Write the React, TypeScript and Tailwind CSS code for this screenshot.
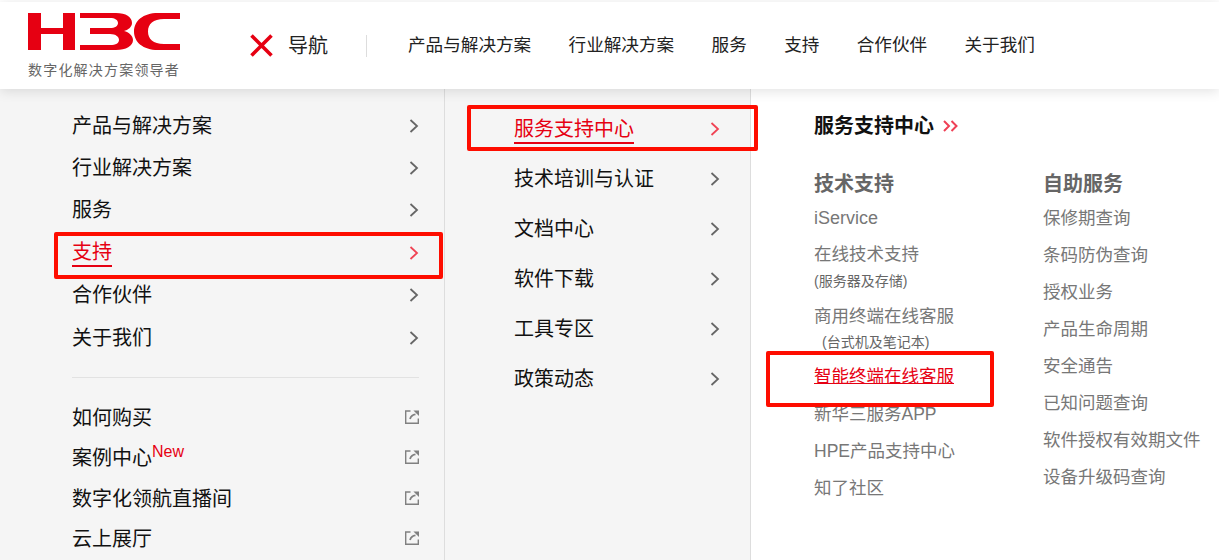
const cjk = "font-['Liberation_Sans','Noto_Sans_CJK_SC',sans-serif]";

const topNav = ['产品与解决方案', '行业解决方案', '服务', '支持', '合作伙伴', '关于我们'];
const leftMenu = ['产品与解决方案', '行业解决方案', '服务', '支持', '合作伙伴', '关于我们'];
const leftLinks = ['如何购买', '案例中心', '数字化领航直播间', '云上展厅'];
const midMenu = ['服务支持中心', '技术培训与认证', '文档中心', '软件下载', '工具专区', '政策动态'];
const selfService = [
	'保修期查询',
	'条码防伪查询',
	'授权业务',
	'产品生命周期',
	'安全通告',
	'已知问题查询',
	'软件授权有效期文件',
	'设备升级码查询'
];

function Logo() {
	return (
		<svg width="152" height="38" viewBox="0 0 152 38" fill="#e60012">
			<path d="M0 0h13v15h22V0h12v37H35V21H13v16H0z" />
			<path d="M52 0H88C98 0 104 4 104 10C104 14 100 17 96 18C101 19 105 23 105 27C105 33 98 37 88 37H52V32H82C88 32 91 30 91 27C91 24 88 21 82 21H62V15H82C87 15 90 13 90 10C90 7 87 5 82 5H52Z" />
			<path d="M152 0H130C115 0 106 8 106 18.5C106 29 115 37 130 37H152V31H136C125 31 120 26 120 18.5C120 11 125 6 136 6H152Z" />
		</svg>
	);
}

function Chevron({ active }: { active?: boolean }) {
	return (
		<svg width="10" height="16" viewBox="0 0 10 16" fill="none" stroke={active ? '#f04354' : '#666'} strokeWidth="1.8">
			<path d="M1.5 2l6.5 6-6.5 6" />
		</svg>
	);
}

function ExternalIcon() {
	return (
		<svg className="mb-[2px]" width="14" height="14" viewBox="0 0 14 14" fill="none" stroke="#808080" strokeWidth="1.4">
			<path d="M5.5 1H.7v12.3h12.6V8.5" />
			<path d="M5 9C6 6 8 4.6 10.5 4.4" strokeWidth="1.8" />
			<path d="M8.4.4H14v5.6z" fill="#808080" stroke="none" />
		</svg>
	);
}

function MenuRow({ label, active }: { label: string; active?: boolean }) {
	return (
		<div className="flex h-[42.4px] items-center justify-between">
			<span className={active ? 'border-b-2 border-[#e60012] text-[#e60012] leading-[26px]' : 'text-[#111]'}>
				{label}
			</span>
			<Chevron active={active} />
		</div>
	);
}

function Annotation({ className }: { className: string }) {
	return <div className={`pointer-events-none absolute rounded-[2px] border-4 border-[#fe0d00] ${className}`} />;
}

export default function App() {
	return (
		<div className={`relative h-[560px] w-[1219px] overflow-hidden bg-white ${cjk}`}>
			<header className="relative z-10 mt-[2px] flex h-[87px] items-center bg-white shadow-[0_2px_12px_rgba(0,0,0,0.12)]">
				<div className="ml-[28px] flex w-[152px] flex-col pt-[1px]">
					<Logo />
					<span className="mt-[10px] whitespace-nowrap text-[14px] leading-[18px] tracking-[1.2px] text-[#666]">
						数字化解决方案领导者
					</span>
				</div>
				<div className="ml-[70px] flex h-[22px] items-center border-r border-[#ddd] pr-[38px]">
					<svg width="23" height="23" viewBox="0 0 23 23" stroke="#e60012" strokeWidth="3.6">
						<path d="M1.5 1.5l20 20M21.5 1.5l-20 20" />
					</svg>
					<span className="ml-[15px] text-[20px] text-[#222]">导航</span>
				</div>
				<nav className="ml-[41px] flex gap-[37.4px] text-[17.6px] text-[#222]">
					{topNav.map((item) => (
						<span key={item}>{item}</span>
					))}
				</nav>
			</header>

			<main className="flex h-[471px]">
				<aside className="w-[445px] border-r border-[#ddd] bg-[#f5f5f5] pl-[72px] pr-[25px] pt-[15.4px] text-[20px]">
					{leftMenu.map((item) => (
						<MenuRow key={item} label={item} active={item === '支持'} />
					))}
					<div className="mt-[18.6px] mb-[19px] border-t border-[#e2e2e2]" />
					{leftLinks.map((item) => (
						<div key={item} className="flex h-[40.6px] items-center justify-between text-[#111]">
							<span className="relative">
								{item}
								{item === '案例中心' && (
									<span className="absolute left-full top-[0px] text-[16px] leading-[18px] text-[#e60012]">
										New
									</span>
								)}
							</span>
							<ExternalIcon />
						</div>
					))}
				</aside>

				<section className="w-[306px] border-r border-[#ddd] bg-[#f5f5f5] pl-[69px] pr-[30px] pt-[15px] text-[20px]">
					{midMenu.map((item) => (
						<div key={item} className="flex h-[50px] items-center justify-between">
							<span className={item === '服务支持中心' ? 'mt-[1px] border-b-2 border-[#e60012] leading-[26px] text-[#e60012]' : 'text-[#111]'}>
								{item}
							</span>
							<Chevron active={item === '服务支持中心'} />
						</div>
					))}
				</section>

				<section className="flex-1 pl-[63px] pt-[22px]">
					<div className="flex h-[30px] items-center gap-[9px] text-[20px] font-bold text-[#111]">
						服务支持中心
						<svg width="16" height="12" viewBox="0 0 16 12" fill="none" stroke="#ef4056" strokeWidth="2">
							<path d="M1 1l5 5-5 5M8.5 1l5 5-5 5" />
						</svg>
					</div>
					<div className="mt-[28px] flex text-[17.5px] text-[#777]">
						<div className="w-[229px]">
							<div className="h-[30px] text-[20px] font-bold leading-[30px] text-[#666]">技术支持</div>
							<div className="mt-[5px] h-[37px] text-[18px] leading-[28px]">iService</div>
							<div className="h-[26px] leading-[26px]">在线技术支持</div>
							<div className="h-[36px] text-[14px] leading-[28px] text-[#666]">(服务器及存储)</div>
							<div className="h-[26px] leading-[26px]">商用终端在线客服</div>
							<div className="h-[34px] pl-[8px] text-[14px] leading-[26px] text-[#666]">(台式机及笔记本)</div>
							<div className="h-[38px] leading-[26px] text-[#e60012] underline">智能终端在线客服</div>
							<div className="h-[37px] leading-[26px]">新华三服务APP</div>
							<div className="h-[37px] leading-[26px]">HPE产品支持中心</div>
							<div className="h-[37px] leading-[26px]">知了社区</div>
						</div>
						<div>
							<div className="h-[30px] text-[20px] font-bold leading-[30px] text-[#666]">自助服务</div>
							<div className="mt-[5px]">
								{selfService.map((item) => (
									<div key={item} className="h-[37px] whitespace-nowrap leading-[28px]">
										{item}
									</div>
								))}
							</div>
						</div>
					</div>
				</section>
			</main>

			<Annotation className="left-[54px] top-[232px] h-[47px] w-[389px]" />
			<Annotation className="left-[467px] top-[105px] h-[46px] w-[291px]" />
			<Annotation className="left-[766px] top-[351px] h-[56px] w-[228px]" />
		</div>
	);
}
